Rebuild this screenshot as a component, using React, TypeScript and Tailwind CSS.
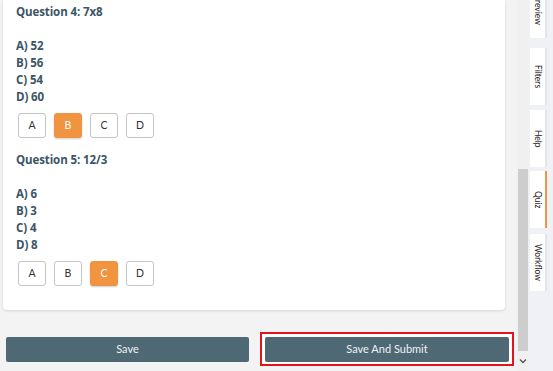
import React from 'react'

interface Question {
  title: string
  options: string[]
  selected: string
}

const questions: Question[] = [
  { title: 'Question 4: 7x8', options: ['A) 52', 'B) 56', 'C) 54', 'D) 60'], selected: 'B' },
  { title: 'Question 5: 12/3', options: ['A) 6', 'B) 3', 'C) 4', 'D) 8'], selected: 'C' }
]

const tabs = [
  { label: 'Preview', mt: 'mt-[-19px]', active: false },
  { label: 'Filters', mt: 'mt-[10px]', active: false },
  { label: 'Help', mt: 'mt-[5px]', active: false },
  { label: 'Quiz', mt: 'mt-[4px]', active: true },
  { label: 'Workflow', mt: 'mt-[6px]', active: false }
]

function QuestionBlock({ q }: { q: Question }) {
  return (
    <div className="flex flex-col">
      <div className="h-[17px] font-['Open_Sans',sans-serif] text-[11.5px] leading-[17px] font-bold tracking-[-0.1px]">
        {q.title}
      </div>
      <div className="mt-[17px] flex flex-col">
        {q.options.map((o) => (
          <div
            key={o}
            className="h-[17px] font-['Open_Sans',sans-serif] text-[11.5px] leading-[17px] font-bold tracking-[-0.1px]"
          >
            {o}
          </div>
        ))}
      </div>
      <div className="mt-[8px] ml-[2px] flex gap-[8px]">
        {['A', 'B', 'C', 'D'].map((l) => (
          <button
            key={l}
            className={
              l === q.selected
                ? 'flex h-[25px] w-[28px] items-center justify-center rounded-[3px] border border-[#ee9440] bg-[#f0943f] text-[10.5px] text-white shadow-[0_1px_2px_rgba(0,0,0,0.2)]'
                : 'flex h-[25px] w-[28px] items-center justify-center rounded-[3px] border border-[#c4c4c4] bg-white text-[10.5px] text-[#333]'
            }
          >
            {l}
          </button>
        ))}
      </div>
    </div>
  )
}

export default function App() {
  return (
    <div className="flex h-[371px] w-[553px] overflow-hidden bg-[#f3f3f3] font-['Lato',sans-serif] text-[#3b5566]">
      <div className="flex w-[517px] flex-col">
        <div className="ml-[3px] h-[310px] w-[502px] rounded-b-[4px] bg-white px-[13px] pt-[3px] shadow-[0_1px_3px_rgba(0,0,0,0.12)]">
          <div className="flex flex-col gap-[13px]">
            {questions.map((q) => (
              <QuestionBlock key={q.title} q={q} />
            ))}
          </div>
        </div>
        <div className="mt-[22px] flex items-center">
          <button className="mt-[1px] ml-[6px] h-[25px] w-[243px] rounded-[2px] bg-[#4e6874] text-[11px] text-[#eef2f4]">
            Save
          </button>
          <div className="ml-[11px] flex h-[34px] w-[254px] items-center justify-center border-2 border-[#e0141c] bg-white">
            <button className="mt-[1px] h-[25px] w-[244px] rounded-[2px] bg-[#4e6874] text-[11px] text-[#eef2f4]">
              Save And Submit
            </button>
          </div>
        </div>
      </div>
      <div className="flex w-[12px] flex-col bg-[#f0f0f0]">
        <div className="mt-[169px] ml-[1px] h-[182px] w-[10px] bg-[#cdcdcd]" />
        <div className="flex flex-1 items-center justify-center">
          <svg width="8" height="6" viewBox="0 0 8 6">
            <path d="M1 1.5 L4 4.5 L7 1.5" fill="none" stroke="#555" strokeWidth="1.3" />
          </svg>
        </div>
      </div>
      <div className="flex w-[24px] flex-col bg-[#f0f1f7] pl-[1px]">
        {tabs.map((t) => (
          <div
            key={t.label}
            className={
              t.active
                ? `${t.mt} flex h-[57px] w-[17px] shrink-0 items-center justify-center border-r-2 border-[#f0943f] bg-white`
                : `${t.mt} flex h-[57px] w-[17px] shrink-0 items-center justify-center border-r-2 border-[#e4e4e4] bg-white`
            }
          >
            <span className="text-[8.5px] leading-none text-[#222] [writing-mode:vertical-rl]">{t.label}</span>
          </div>
        ))}
      </div>
    </div>
  )
}
